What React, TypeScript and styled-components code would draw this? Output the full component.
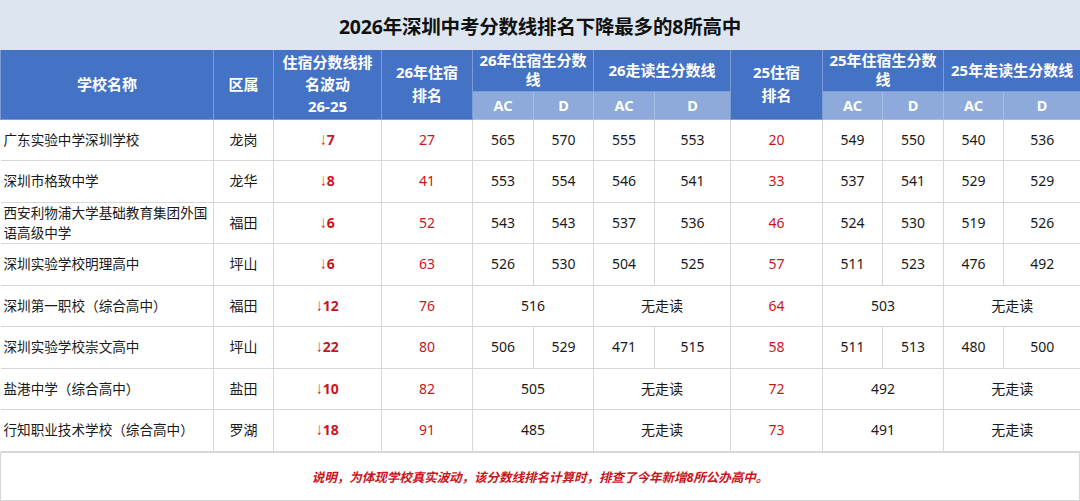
import React from 'react';
import styled, { createGlobalStyle } from 'styled-components';

const GlobalStyle = createGlobalStyle`
  html, body { margin: 0; padding: 0; background: #ffffff; }
  body { font-family: "Noto Sans", "Noto Sans CJK SC", sans-serif; }
`;

const Page = styled.div`
  width: 1080px;
  height: 501px;
  overflow: hidden;
  display: flex;
  flex-direction: column;
  background: #ffffff;
`;

const TitleBar = styled.div`
  height: 50px;
  flex: none;
  display: flex;
  align-items: center;
  justify-content: center;
  background: #dde6f0;
  color: #111111;
  font-family: "Noto Sans", "Noto Sans CJK SC", sans-serif;
  font-size: 19.5px;
  font-weight: 700;
  letter-spacing: -0.2px;
`;

const Table = styled.table`
  width: 1080px;
  table-layout: fixed;
  border-collapse: collapse;
  flex: none;
`;

const Col = styled.col<{ $w: number }>`
  width: ${(p) => p.$w}px;
`;

const HeadCell = styled.th<{ $lh?: number }>`
  background: #4472c4;
  color: #ffffff;
  font-size: 15px;
  font-weight: 700;
  line-height: ${(p) => p.$lh ?? 20}px;
  text-align: center;
  vertical-align: middle;
  padding: 0;
  border: 1px solid #7d9cd6;
  border-top: none;
  white-space: nowrap;
`;

const GroupRow = styled.tr`
  height: 41px;
`;

const SubRow = styled.tr`
  height: 28px;
`;

const SubHeadCell = styled.th`
  background: #8eaadb;
  color: #ffffff;
  font-size: 14.5px;
  font-weight: 700;
  line-height: 20px;
  text-align: center;
  padding: 0;
  border: 1px solid #a7bde4;
`;

const BodyRow = styled.tr`
  height: 41.5px;
`;

const Cell = styled.td<{ $left?: boolean; $tone?: 'plain' | 'rank' | 'drop' }>`
  border: 1px solid #d6d6d6;
  padding: ${(p) => (p.$left ? '0 2px 0 3px' : '0')};
  text-align: ${(p) => (p.$left ? 'left' : 'center')};
  vertical-align: middle;
  font-size: ${(p) => (p.$left ? '13.6px' : '14px')};
  line-height: 20px;
  color: ${(p) => (p.$tone === 'rank' || p.$tone === 'drop' ? '#c8161d' : '#1a1a1a')};
  font-weight: ${(p) => (p.$tone === 'drop' ? 700 : 400)};
  background: #ffffff;
  &:first-child { border-left: none; }
  &:last-child { border-right: none; }
`;

const Arrow = styled.span`
  font-family: "Liberation Sans", "DejaVu Sans", sans-serif;
  font-weight: 400;
  font-size: 17px;
  line-height: 1;
  display: inline-block;
  transform: scaleX(0.75);
  margin: 0 -1px 0 -1px;
`;

const Footer = styled.div`
  flex: 1;
  display: flex;
  align-items: center;
  justify-content: center;
  border: 1px solid #d6d6d6;
  color: #c8161d;
  font-size: 12.6px;
  font-weight: 700;
  font-style: italic;
  letter-spacing: -0.1px;
`;

type Pair = [string, string];
type Row = {
  name: string;
  area: string;
  drop: string;
  rank26: string;
  board26: Pair | string;
  walk26: Pair | string;
  rank25: string;
  board25: Pair | string;
  walk25: Pair | string;
};

const rows: Row[] = [
  { name: '广东实验中学深圳学校', area: '龙岗', drop: '7', rank26: '27', board26: ['565', '570'], walk26: ['555', '553'], rank25: '20', board25: ['549', '550'], walk25: ['540', '536'] },
  { name: '深圳市格致中学', area: '龙华', drop: '8', rank26: '41', board26: ['553', '554'], walk26: ['546', '541'], rank25: '33', board25: ['537', '541'], walk25: ['529', '529'] },
  { name: '西安利物浦大学基础教育集团外国语高级中学', area: '福田', drop: '6', rank26: '52', board26: ['543', '543'], walk26: ['537', '536'], rank25: '46', board25: ['524', '530'], walk25: ['519', '526'] },
  { name: '深圳实验学校明理高中', area: '坪山', drop: '6', rank26: '63', board26: ['526', '530'], walk26: ['504', '525'], rank25: '57', board25: ['511', '523'], walk25: ['476', '492'] },
  { name: '深圳第一职校（综合高中）', area: '福田', drop: '12', rank26: '76', board26: '516', walk26: '无走读', rank25: '64', board25: '503', walk25: '无走读' },
  { name: '深圳实验学校崇文高中', area: '坪山', drop: '22', rank26: '80', board26: ['506', '529'], walk26: ['471', '515'], rank25: '58', board25: ['511', '513'], walk25: ['480', '500'] },
  { name: '盐港中学（综合高中）', area: '盐田', drop: '10', rank26: '82', board26: '505', walk26: '无走读', rank25: '72', board25: '492', walk25: '无走读' },
  { name: '行知职业技术学校（综合高中）', area: '罗湖', drop: '18', rank26: '91', board26: '485', walk26: '无走读', rank25: '73', board25: '491', walk25: '无走读' },
];

const widths = [213, 60, 108, 91, 61, 60, 61, 76, 92, 60, 61, 60, 77];

const ScorePair: React.FC<{ v: Pair | string }> = ({ v }) =>
  typeof v === 'string' ? (
    <Cell colSpan={2}>{v}</Cell>
  ) : (
    <>
      <Cell>{v[0]}</Cell>
      <Cell>{v[1]}</Cell>
    </>
  );

export default function App() {
  return (
    <Page>
      <GlobalStyle />
      <TitleBar>2026年深圳中考分数线排名下降最多的8所高中</TitleBar>
      <Table>
        <colgroup>
          {widths.map((w, i) => (
            <Col key={i} $w={w} />
          ))}
        </colgroup>
        <thead>
          <GroupRow>
            <HeadCell rowSpan={2}>学校名称</HeadCell>
            <HeadCell rowSpan={2}>区属</HeadCell>
            <HeadCell rowSpan={2} $lh={22}>
              住宿分数线排
              <br />
              名波动
              <br />
              26-25
            </HeadCell>
            <HeadCell rowSpan={2} $lh={23}>
              26年住宿
              <br />
              排名
            </HeadCell>
            <HeadCell colSpan={2} $lh={19}>
              26年住宿生分数
              <br />
              线
            </HeadCell>
            <HeadCell colSpan={2}>26走读生分数线</HeadCell>
            <HeadCell rowSpan={2} $lh={23}>
              25住宿
              <br />
              排名
            </HeadCell>
            <HeadCell colSpan={2} $lh={19}>
              25年住宿生分数
              <br />
              线
            </HeadCell>
            <HeadCell colSpan={2}>25年走读生分数线</HeadCell>
          </GroupRow>
          <SubRow>
            <SubHeadCell>AC</SubHeadCell>
            <SubHeadCell>D</SubHeadCell>
            <SubHeadCell>AC</SubHeadCell>
            <SubHeadCell>D</SubHeadCell>
            <SubHeadCell>AC</SubHeadCell>
            <SubHeadCell>D</SubHeadCell>
            <SubHeadCell>AC</SubHeadCell>
            <SubHeadCell>D</SubHeadCell>
          </SubRow>
        </thead>
        <tbody>
          {rows.map((r) => (
            <BodyRow key={r.name}>
              <Cell $left>{r.name}</Cell>
              <Cell>{r.area}</Cell>
              <Cell $tone="drop">
                <Arrow>↓</Arrow>
                {r.drop}
              </Cell>
              <Cell $tone="rank">{r.rank26}</Cell>
              <ScorePair v={r.board26} />
              <ScorePair v={r.walk26} />
              <Cell $tone="rank">{r.rank25}</Cell>
              <ScorePair v={r.board25} />
              <ScorePair v={r.walk25} />
            </BodyRow>
          ))}
        </tbody>
      </Table>
      <Footer>说明，为体现学校真实波动，该分数线排名计算时，排查了今年新增8所公办高中。</Footer>
    </Page>
  );
}
